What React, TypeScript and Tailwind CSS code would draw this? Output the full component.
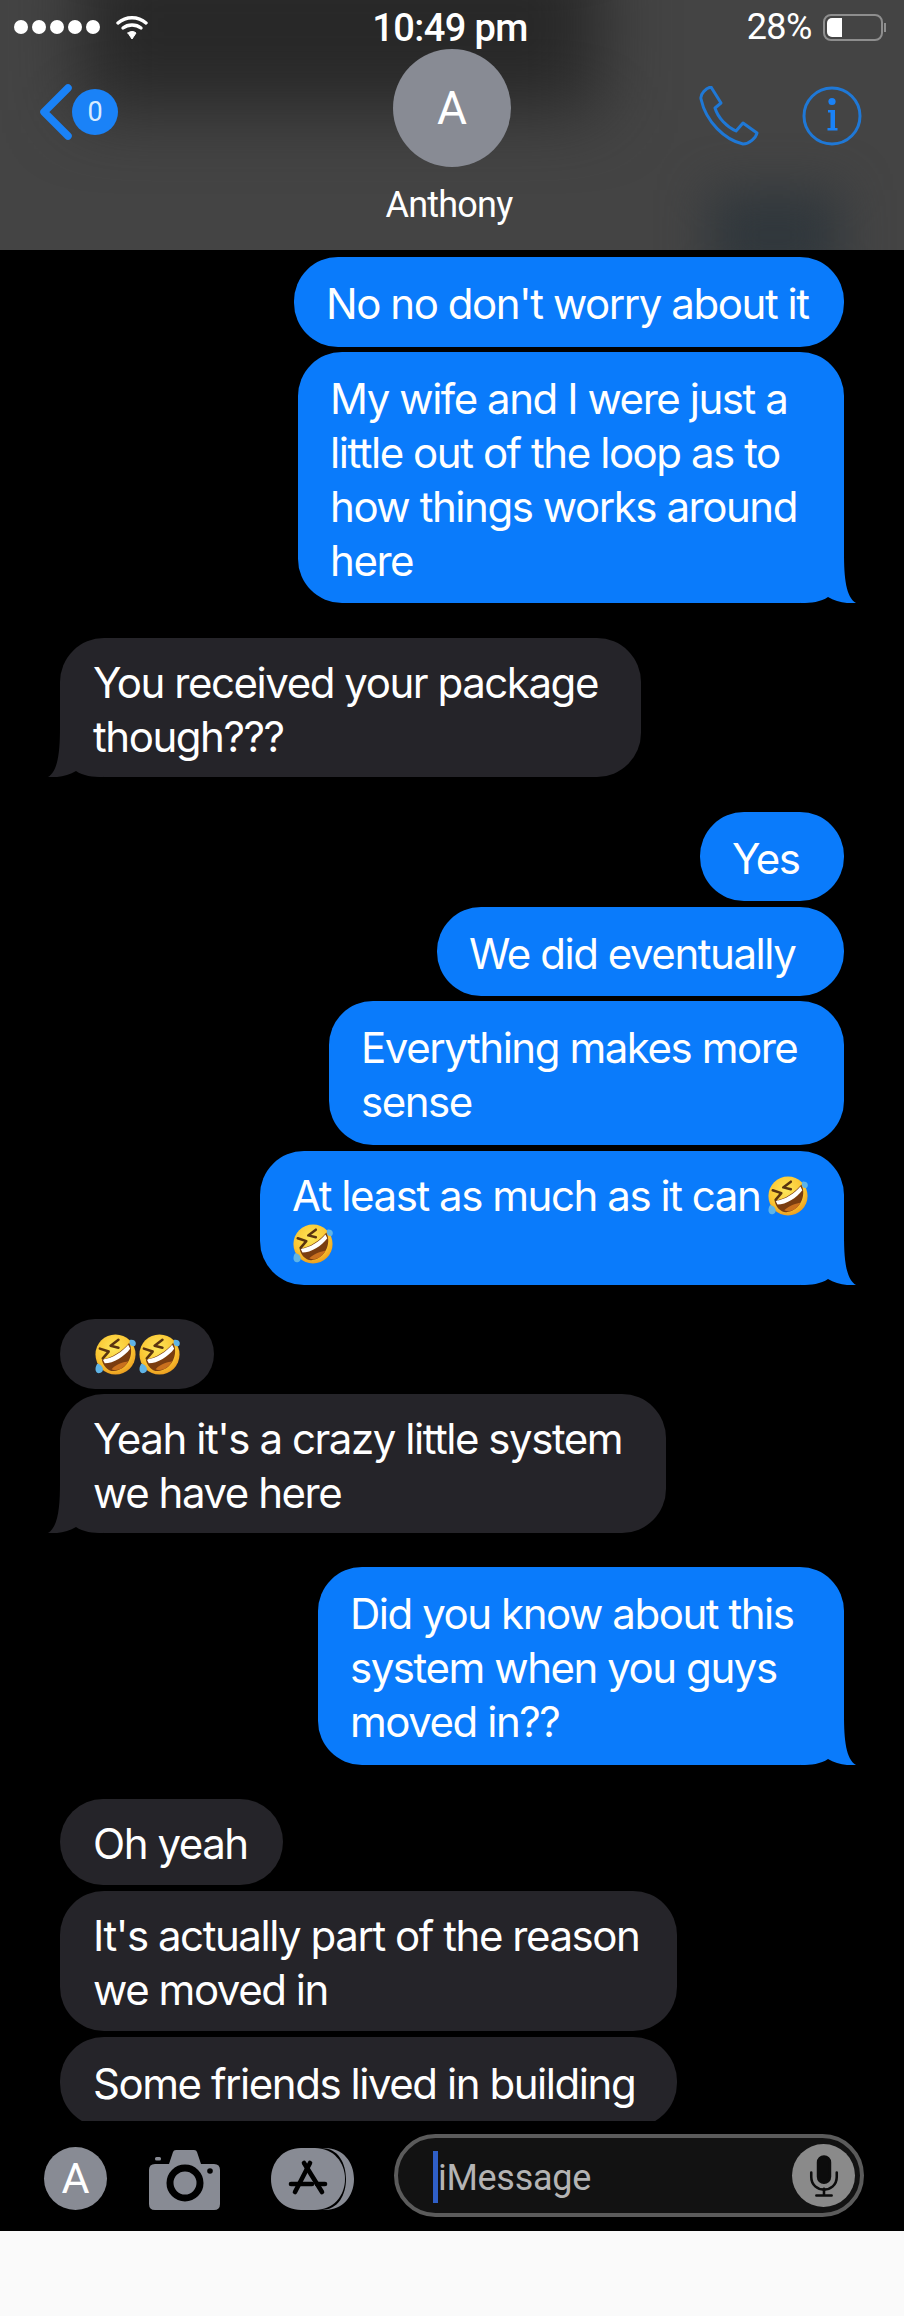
import React from "react";

const FONT = "font-['Roboto',sans-serif]";

type Msg = {
  lines: React.ReactNode[];
  me?: boolean;
  tail?: boolean;
  box: string; // width, height and top margin of the bubble
};

function Rofl({ className }: { className?: string }) {
  return (
    <svg viewBox="0 0 44 44" className={className}>
      <defs>
        <radialGradient id="roflFace" cx="45%" cy="35%" r="70%">
          <stop offset="0%" stopColor="#fde65a" />
          <stop offset="65%" stopColor="#fbc531" />
          <stop offset="100%" stopColor="#e8951c" />
        </radialGradient>
      </defs>
      <circle cx="22" cy="22" r="20.5" fill="url(#roflFace)" />
      <path d="M8 27 C18 26 30 18 36 10 C42 22 34 38 20 39 C14 39 9 33 8 27Z" fill="#7a3d10" />
      <path d="M9 27 C19 26 29 19 35 12 L37 16 C31 24 20 31 11 31Z" fill="#fff" />
      <path d="M18 37 C24 31 31 30 35 29 C32 35 25 40 18 37Z" fill="#c9701e" />
      <path d="M25 7 L17 13 L25 15 M6 16 L15 19 L9 26" fill="none" stroke="#5a3410" strokeWidth="2.6" strokeLinecap="round" strokeLinejoin="round" />
      <path d="M37 7 C42 6 44 10 42 13 C39 15 35 12 37 7Z" fill="#5fb4e6" />
      <path d="M3 32 C0 37 2 42 6 41 C10 40 10 36 7 33 C5 32 4 31 3 32Z" fill="#5fb4e6" />
    </svg>
  );
}

function Tail({ me }: { me?: boolean }) {
  return (
    <svg
      viewBox="0 0 60 50"
      className={
        me
          ? "absolute right-[-12px] bottom-0 w-[60px] h-[50px]"
          : "absolute left-[-12px] bottom-0 w-[60px] h-[50px] -scale-x-100"
      }
    >
      <path
        d="M48 0 C48 25 50 44 60 50 C52 51 40 49 32 44 C25 49 15 50 5 50 L5 0Z"
        fill={me ? "#0a7bfb" : "#252429"}
      />
    </svg>
  );
}

const messages: Msg[] = [
  { me: true, box: "w-[550px] h-[90px] mt-[7px]", lines: ["No no don't worry about it"] },
  {
    me: true,
    tail: true,
    box: "w-[546px] h-[251px] mt-[5px]",
    lines: ["My wife and I were just a", "little out of the loop as to", "how things works around", "here"],
  },
  { tail: true, box: "w-[581px] h-[139px] mt-[35px]", lines: ["You received your package", "though???"] },
  { me: true, box: "w-[144px] h-[89px] mt-[35px]", lines: ["Yes"] },
  { me: true, box: "w-[407px] h-[89px] mt-[6px]", lines: ["We did eventually"] },
  { me: true, box: "w-[515px] h-[144px] mt-[5px]", lines: ["Everything makes more", "sense"] },
  {
    me: true,
    tail: true,
    box: "w-[584px] h-[134px] mt-[6px]",
    lines: [
      <span className="flex items-center">
        At least as much as it can
        <Rofl className="w-[42px] h-[42px] ml-[7px]" />
      </span>,
      <Rofl className="w-[42px] h-[42px] mb-[6px]" />,
    ],
  },
];

const messages2: Msg[] = [
  { tail: true, box: "w-[606px] h-[139px] mt-[5px]", lines: ["Yeah it's a crazy little system", "we have here"] },
  {
    me: true,
    tail: true,
    box: "w-[526px] h-[198px] mt-[34px]",
    lines: ["Did you know about this", "system when you guys", "moved in??"],
  },
  { box: "w-[223px] h-[86px] mt-[34px]", lines: ["Oh yeah"] },
  { box: "w-[617px] h-[140px] mt-[6px]", lines: ["It's actually part of the reason", "we moved in"] },
  { box: "w-[617px] h-[90px] mt-[6px]", lines: ["Some friends lived in building"] },
];

function Bubble({ msg }: { msg: Msg }) {
  return (
    <div
      className={`relative shrink-0 flex flex-col justify-center rounded-[44px] pt-[4px] font-['Inter',sans-serif] text-[42px] leading-[54px] tracking-[-1.45px] text-white whitespace-nowrap ${
        msg.me ? "self-end pl-[32px] bg-[#0a7bfb]" : "self-start pl-[33px] bg-[#252429]"
      } ${msg.box}`}
    >
      {msg.tail && <Tail me={msg.me} />}
      {msg.lines.map((line, i) => (
        <div key={i} className="relative">
          {line}
        </div>
      ))}
    </div>
  );
}

function StatusBar() {
  return (
    <div className="relative grid grid-cols-3 items-center h-[49px] pl-[14px] pr-[18px] text-white">
      <div className="flex items-center gap-[4px]">
        <span className="w-[14px] h-[14px] rounded-full bg-white" />
        <span className="w-[14px] h-[14px] rounded-full bg-white" />
        <span className="w-[14px] h-[14px] rounded-full bg-white" />
        <span className="w-[14px] h-[14px] rounded-full bg-white" />
        <span className="w-[14px] h-[14px] rounded-full bg-white" />
        <svg viewBox="0 0 32 24" className="w-[32px] h-[24px] ml-[12px] mt-[1px]" fill="none" stroke="#fff" strokeWidth="3.4" strokeLinecap="round">
          <path d="M2 7 C10 0 22 0 30 7" />
          <path d="M7 12 C12 8 20 8 25 12" />
          <path d="M12 17 L16 23 L20 17 C18 15 14 15 12 17Z" fill="#fff" strokeWidth="1" strokeLinejoin="round" />
        </svg>
      </div>
      <div className="text-center text-[38px] font-medium tracking-[-0.6px] leading-[44px] mt-[2px]">10:49 pm</div>
      <div className="flex items-center justify-end">
        <span className="text-[36px] tracking-[-0.5px] mr-[11px]">28%</span>
        <div className="w-[60px] h-[27px] rounded-[8px] border-[2px] border-[#8e8e8e] p-[2px]">
          <div className="w-[15px] h-full rounded-l-[5px] bg-white" />
        </div>
        <span className="w-[2px] h-[9px] bg-[#8e8e8e] ml-[1px]" />
      </div>
    </div>
  );
}

function NavBar() {
  return (
    <div className="relative grid grid-cols-[393px_118px_1fr] h-[118px]">
      <div className="flex items-center pl-[40px] mt-[8px]">
        <svg viewBox="0 0 32 56" className="w-[32px] h-[56px]" fill="none" stroke="#1a82f7" strokeWidth="7.5" strokeLinecap="round" strokeLinejoin="round">
          <path d="M28 4 L4 28 L28 52" />
        </svg>
        <div className="w-[46px] h-[46px] rounded-full bg-[#1a82f7] flex items-center justify-center text-[#d8ecff] text-[27px] leading-none">
          0
        </div>
      </div>
      <div className="w-[118px] h-[118px] rounded-full bg-[#888b94] flex items-center justify-center text-white text-[46px]">
        A
      </div>
      <div className="flex items-center justify-end pr-[42px] gap-[43px] mt-[16px]">
        <svg viewBox="0 0 60 60" className="w-[60px] h-[60px]" fill="none" stroke="#1f78d6" strokeWidth="3" strokeLinejoin="round">
          <path d="M2 13 C1 8 7 2 12 1 L22 17 L16 22 C19 32 28 41 37 45 L44 37 L58 47 C57 52 50 58 44 58 C26 54 7 36 2 13Z" />
        </svg>
        <svg viewBox="0 0 60 60" className="w-[60px] h-[60px]">
          <circle cx="30" cy="30" r="28" fill="none" stroke="#1f78d6" strokeWidth="3" />
          <circle cx="30" cy="15.5" r="3.6" fill="#1a82f7" />
          <path d="M26 24 H33 V42 H35.5 V44.5 H25.5 V42 H28.5 V26.5 H26Z" fill="#1a82f7" />
        </svg>
      </div>
    </div>
  );
}

function InputBar() {
  return (
    <div className="flex pl-[44px] pt-[13px] h-[110px] shrink-0 bg-black">
      <div className="w-[63px] h-[63px] mt-[13px] rounded-full bg-[#888b94] flex items-center justify-center text-white text-[43px]">
        A
      </div>
      <svg viewBox="0 0 71 60" className="w-[71px] h-[60px] ml-[42px] mt-[16px]">
        <path d="M6 14 H20 L24 2 Q24.5 0 27 0 H45 Q47.5 0 48 2 L52 14 H65 Q71 14 71 20 V54 Q71 60 65 60 H6 Q0 60 0 54 V20 Q0 14 6 14Z" fill="#888b94" />
        <rect x="6" y="7" width="6" height="3.5" rx="1.5" fill="#888b94" />
        <circle cx="36" cy="33" r="15" fill="none" stroke="#000" strokeWidth="7" />
        <circle cx="61" cy="21" r="2.8" fill="#000" />
      </svg>
      <svg viewBox="0 0 83 62" className="w-[83px] h-[62px] ml-[51px] mt-[14px]">
        <path d="M50 0 H54 C72 0 83 14 83 31 C83 48 72 62 54 62 H50 C68 62 75 46 75 31 C75 16 68 0 50 0Z" fill="#888b94" />
        <path d="M30 0 H44 C62 0 74 14 74 31 C74 48 62 62 44 62 H30 C12 62 0 48 0 31 C0 14 12 0 30 0Z" fill="#888b94" />
        <g stroke="#000" strokeWidth="4.6" strokeLinecap="round" fill="none">
          <path d="M33 15 L51 44" />
          <path d="M39 15 L24 44" />
          <path d="M20 36 H41" />
          <path d="M46 36 H54" />
        </g>
      </svg>
      <div className="flex items-center w-[470px] h-[83px] ml-[40px] rounded-[42px] border-[4px] border-[#5b5b5b] bg-[#121212] pl-[35px] pr-[5px]">
        <span className="w-[5px] h-[52px] bg-[#2f5fc7] mt-[2px]" />
        <span className="flex-1 text-[36px] tracking-[-0.3px] text-[#b4b4b4] mt-[4px]">iMessage</span>
        <div className="w-[63px] h-[63px] rounded-full bg-[#8a8a8a] flex items-center justify-center">
          <svg viewBox="0 0 40 50" className="w-[34px] h-[46px]" fill="none" stroke="#0c0c0c" strokeWidth="3" strokeLinecap="round">
            <rect x="13" y="2" width="14" height="31" rx="7" fill="#0c0c0c" />
            <path d="M5 21 V26 C5 46 35 46 35 26 V21" />
            <path d="M20 40 V47 M11 48 H29" />
          </svg>
        </div>
      </div>
    </div>
  );
}

export default function App() {
  return (
    <div className={`w-[904px] h-[2316px] flex flex-col overflow-hidden bg-black ${FONT}`}>
      <header className="relative h-[250px] shrink-0 overflow-hidden bg-[#444444]">
        <div className="absolute left-[80px] top-[-60px] w-[520px] h-[170px] bg-[#282828] blur-[35px]" />
        <div className="absolute left-[710px] top-[190px] w-[130px] h-[90px] bg-[#30373c] blur-[24px]" />
        <StatusBar />
        <NavBar />
        <div className="relative text-center text-white text-[36px] leading-[40px] tracking-[-0.8px] pt-[18px] pr-[6px]">
          Anthony
        </div>
      </header>

      <main className="flex flex-col h-[1871px] shrink-0 overflow-hidden pl-[60px] pr-[60px]">
        {messages.map((m, i) => (
          <Bubble key={i} msg={m} />
        ))}
        <div className="self-start shrink-0 flex items-center justify-center w-[154px] h-[70px] mt-[34px] rounded-[35px] bg-[#252429]">
          <Rofl className="w-[43px] h-[43px]" />
          <Rofl className="w-[43px] h-[43px] ml-[1px]" />
        </div>
        {messages2.map((m, i) => (
          <Bubble key={i} msg={m} />
        ))}
      </main>

      <InputBar />
      <div className="flex-1 bg-[#fafafa]" />
    </div>
  );
}
